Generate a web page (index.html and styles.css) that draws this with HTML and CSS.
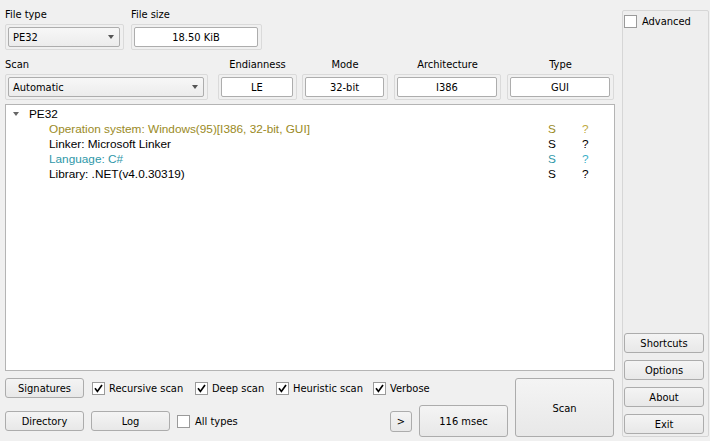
FILE: index.html
```html
<!DOCTYPE html>
<html>
<head>
<meta charset="utf-8">
<link rel="stylesheet" href="styles.css">
</head>
<body>
<div class="app">
  <div class="main">
    <div class="row1">
      <div class="field ft">
        <div class="lbl">File type</div>
        <div class="frame"><div class="combo"><span>PE32</span><span class="arrow"></span></div></div>
      </div>
      <div class="field fs">
        <div class="lbl">File size</div>
        <div class="frame"><div class="edit">18.50 KiB</div></div>
      </div>
    </div>
    <div class="row2">
      <div class="field scan">
        <div class="lbl">Scan</div>
        <div class="frame"><div class="combo"><span>Automatic</span><span class="arrow"></span></div></div>
      </div>
      <div class="field endi">
        <div class="lbl c">Endianness</div>
        <div class="frame"><div class="edit">LE</div></div>
      </div>
      <div class="field mode">
        <div class="lbl c">Mode</div>
        <div class="frame"><div class="edit">32-bit</div></div>
      </div>
      <div class="field arch">
        <div class="lbl c">Architecture</div>
        <div class="frame"><div class="edit">I386</div></div>
      </div>
      <div class="field type">
        <div class="lbl c">Type</div>
        <div class="frame"><div class="edit">GUI</div></div>
      </div>
    </div>
    <div class="tree">
      <div class="trow root"><span class="twisty"></span><span class="name">PE32</span></div>
      <div class="trow child olive"><span class="name">Operation system: Windows(95)[I386, 32-bit, GUI]</span><span class="s">S</span><span class="q">?</span></div>
      <div class="trow child"><span class="name">Linker: Microsoft Linker</span><span class="s">S</span><span class="q">?</span></div>
      <div class="trow child teal"><span class="name">Language: C#</span><span class="s">S</span><span class="q">?</span></div>
      <div class="trow child"><span class="name">Library: .NET(v4.0.30319)</span><span class="s">S</span><span class="q">?</span></div>
    </div>
    <div class="bottom">
      <div class="bleft">
        <div class="brow1">
          <div class="btn sig">Signatures</div>
          <label class="chk first w-rec"><span class="box on"><svg width="13" height="13" viewBox="0 0 13 13"><path d="M3 6.3 L5.4 9.4 L10 3" fill="none" stroke="#000" stroke-width="1.7"/></svg></span>Recursive scan</label>
          <label class="chk w-deep"><span class="box on"><svg width="13" height="13" viewBox="0 0 13 13"><path d="M3 6.3 L5.4 9.4 L10 3" fill="none" stroke="#000" stroke-width="1.7"/></svg></span>Deep scan</label>
          <label class="chk w-heu"><span class="box on"><svg width="13" height="13" viewBox="0 0 13 13"><path d="M3 6.3 L5.4 9.4 L10 3" fill="none" stroke="#000" stroke-width="1.7"/></svg></span>Heuristic scan</label>
          <label class="chk"><span class="box on"><svg width="13" height="13" viewBox="0 0 13 13"><path d="M3 6.3 L5.4 9.4 L10 3" fill="none" stroke="#000" stroke-width="1.7"/></svg></span>Verbose</label>
        </div>
        <div class="brow2">
          <div class="btn dir">Directory</div>
          <div class="btn log">Log</div>
          <label class="chk alltypes"><span class="box"></span>All types</label>
          <div class="btn more">&gt;</div>
          <div class="btn time">116 msec</div>
        </div>
      </div>
      <div class="btn scanbtn">Scan</div>
    </div>
  </div>
  <div class="side">
    <label class="chk adv"><span class="box"></span>Advanced</label>
    <div class="sbtns">
      <div class="btn sbtn">Shortcuts</div>
      <div class="btn sbtn">Options</div>
      <div class="btn sbtn">About</div>
      <div class="btn sbtn">Exit</div>
    </div>
  </div>
</div>
</body>
</html>
```

FILE: styles.css
```css
* { box-sizing: border-box; }
html, body {
  margin: 0;
  padding: 0;
  background: #f0f0f0;
  width: 710px;
  height: 441px;
  overflow: hidden;
}
body {
  font-family: "DejaVu Sans", "Liberation Sans", sans-serif;
  font-stretch: condensed;
  font-size: 11px;
  color: #000;
}
.app {
  display: flex;
  height: 441px;
}
.main {
  width: 610px;
  margin-left: 5px;
  padding-top: 5px;
  display: flex;
  flex-direction: column;
}
.row1, .row2 {
  display: flex;
}
.row2 { margin-top: 5px; }
.lbl {
  height: 19px;
  line-height: 18px;
  padding-top: 1px;
  white-space: nowrap;
}
.lbl.c { text-align: center; }
.frame {
  height: 26px;
  border: 1px solid #dadada;
  border-radius: 2px;
  padding: 2px 3px 2px 2px;
}
.combo, .edit {
  height: 20px;
  border: 1px solid #adadad;
  border-radius: 2px;
  display: flex;
  align-items: center;
}
.combo {
  background: linear-gradient(#f7f7f7, #ececec);
  padding-left: 4px;
  justify-content: space-between;
}
.edit {
  background: #fff;
  justify-content: center;
}
.arrow {
  width: 0;
  height: 0;
  border-left: 3.5px solid transparent;
  border-right: 3.5px solid transparent;
  border-top: 4px solid #555;
  margin-right: 5px;
}
.ft { width: 119px; }
.fs { width: 131px; margin-left: 7px; }
.scan { width: 203px; }
.endi { width: 79px; margin-left: 10px; }
.mode { width: 86px; margin-left: 5px; }
.arch { width: 107px; margin-left: 6px; }
.type { width: 107px; margin-left: 6px; }
.tree {
  margin-top: 4px;
  height: 267px;
  background: #fff;
  border: 1px solid #b4b4b4;
  padding-top: 2px;
  font-family: "Liberation Sans", "DejaVu Sans", sans-serif;
  font-stretch: normal;
  font-size: 11.8px;
}
.trow {
  height: 15px;
  line-height: 15px;
  display: flex;
  white-space: nowrap;
}
.twisty {
  width: 0;
  height: 0;
  border-left: 3.5px solid transparent;
  border-right: 3.5px solid transparent;
  border-top: 4px solid #666;
  margin: 5px 10px 0 7px;
}
.child .name {
  width: 499px;
  margin-left: 43px;
}
.s { width: 34px; }
.olive { color: #9a8a1e; }
.olive .q { color: #c0aa40; }
.teal { color: #2e97a8; }
.teal .q { color: #3ab0c8; }
.bottom {
  margin-top: 7px;
  height: 59px;
  display: flex;
}
.bleft {
  width: 503px;
  display: flex;
  flex-direction: column;
}
.brow1 {
  height: 20px;
  display: flex;
  align-items: center;
}
.brow2 {
  margin-top: 7px;
  height: 32px;
  display: flex;
  align-items: center;
}
.btn {
  border: 1px solid #acacac;
  border-radius: 3px;
  background: linear-gradient(#f4f4f4, #e8e8e8);
  display: flex;
  align-items: center;
  justify-content: center;
  white-space: nowrap;
}
.sig, .dir { width: 79px; height: 20px; }
.log { width: 79px; height: 20px; margin-left: 7px; }
.chk {
  display: flex;
  align-items: center;
  white-space: nowrap;
  margin-left: 14px;
}
.chk.first { margin-left: 8px; }
.w-rec { width: 89px; }
.w-deep { width: 67px; }
.w-heu { width: 83px; }
.box {
  flex: none;
  width: 13px;
  height: 13px;
  border: 1px solid #9a9a9a;
  background: #fff;
  margin-right: 4px;
  position: relative;
}
.box svg {
  position: absolute;
  left: -1px;
  top: -1px;
}
.alltypes { margin-left: 7px; }
.alltypes .box { margin-right: 5px; }
.more { width: 22px; height: 21px; margin-left: auto; }
.time { width: 89px; height: 32px; margin-left: 7px; }
.scanbtn { width: 99px; height: 59px; margin-left: 7px; padding-top: 2px; }
.side {
  width: 87px;
  margin-left: 7px;
  margin-top: 10px;
  height: 427px;
  border: 1px solid #d6d6d6;
  border-radius: 2px;
  background: #eeeeee;
  padding: 4px 0 2px 1px;
  display: flex;
  flex-direction: column;
}
.chk.adv { margin-left: 0; }
.adv .box { margin-right: 5px; }
.sbtns {
  margin-top: auto;
  display: flex;
  flex-direction: column;
  gap: 7px;
}
.sbtn { width: 80px; height: 20px; }
```
